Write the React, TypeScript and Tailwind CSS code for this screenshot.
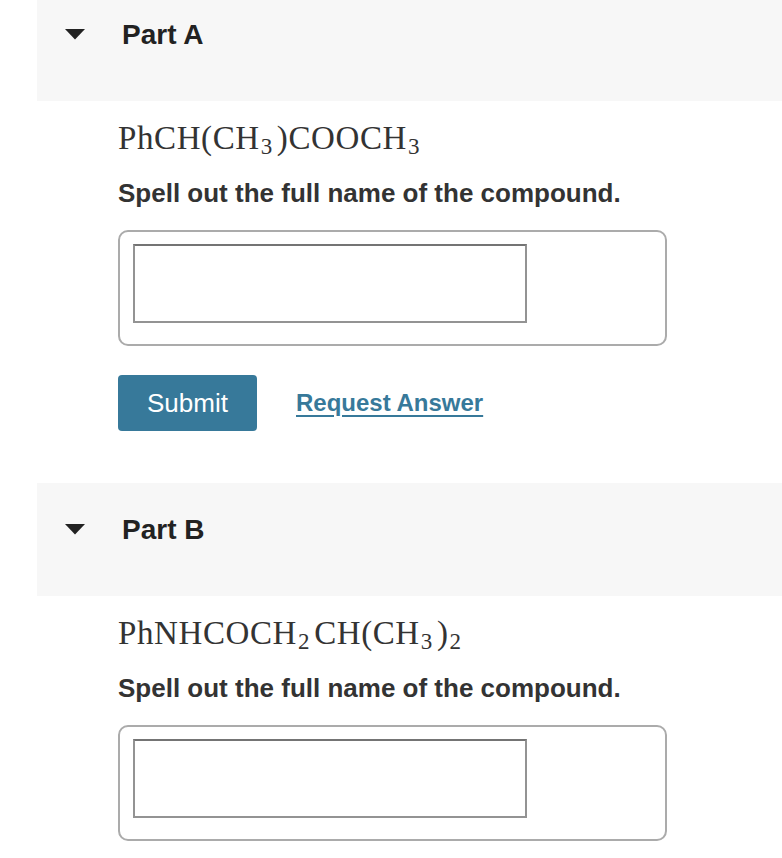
const SANS = 'font-["Liberation_Sans",Arial,sans-serif]'

function Sub({ children }: { children: React.ReactNode }) {
  return <sub className="text-[23px] -bottom-[0.22em] mx-[1px] mr-[4px]">{children}</sub>
}

function PartHeader({ label }: { label: string }) {
  return (
    <div className="ml-[37px] h-[113px] bg-[#f7f7f7] flex items-start pt-[33px]">
      <svg width="20" height="11" viewBox="0 0 20 11" className="ml-[28px] mt-[8px]">
        <path d="M0 0 L20 0 L10 10.5 Z" fill="#222" />
      </svg>
      <span className={`${SANS} ml-[37px] text-[28px] leading-[28px] font-bold text-[#222]`}>{label}</span>
    </div>
  )
}

function Formula({ children }: { children: React.ReactNode }) {
  return (
    <div className="mt-[17px] h-[40px] leading-[40px] text-[33px] tracking-[0.6px] font-['Liberation_Serif',serif] text-[#333] whitespace-nowrap">
      {children}
    </div>
  )
}

function AnswerBox() {
  return (
    <div className="mt-[21px] w-[549px] border-2 border-[#ababab] rounded-[10px] pt-[12px] pb-[21px] px-[13px]">
      <div className="w-[394px] h-[79px] border-2 border-[#939393] border-t-[#747474] bg-white" />
    </div>
  )
}

export default function App() {
  return (
    <div className={`${SANS} w-[782px] h-[858px] overflow-hidden bg-white text-[#333]`}>
      <div className="-mt-[12px]">
        <PartHeader label="Part A" />
      </div>

      <div className="pl-[118px]">
        <Formula>
          PhCH(CH<Sub>3</Sub>)COOCH<Sub>3</Sub>
        </Formula>
        <p className="mt-[19px] text-[26px] leading-[32px] font-bold text-[#333]">
          Spell out the full name of the compound.
        </p>
        <AnswerBox />
        <div className="mt-[29px] flex items-center">
          <button className="h-[56px] w-[139px] rounded-[4px] bg-[#37799a] text-white text-[26px]">
            Submit
          </button>
          <a href="#" className="ml-[39px] text-[24px] font-bold text-[#37799a] underline underline-offset-[4px] decoration-[2px]">
            Request Answer
          </a>
        </div>
      </div>

      <div className="mt-[52px]">
        <PartHeader label="Part B" />
      </div>

      <div className="pl-[118px]">
        <Formula>
          PhNHCOCH<Sub>2</Sub>CH(CH<Sub>3</Sub>)<Sub>2</Sub>
        </Formula>
        <p className="mt-[19px] text-[26px] leading-[32px] font-bold text-[#333]">
          Spell out the full name of the compound.
        </p>
        <AnswerBox />
      </div>
    </div>
  )
}
